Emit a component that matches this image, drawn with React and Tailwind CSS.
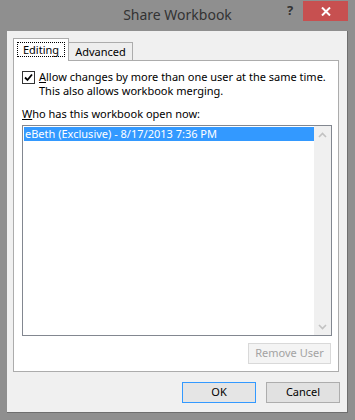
import React from "react";

const Chevron = ({ up }) => (
  <svg width="9" height="6" viewBox="0 0 9 6">
    <polyline
      points={up ? "1,5 4.5,1.5 8,5" : "1,1 4.5,4.5 8,1"}
      fill="none"
      stroke="#c2c2c2"
      strokeWidth="1.6"
    />
  </svg>
);

export default function App() {
  return (
    <div className="w-[355px] h-[420px] bg-[#8f8f8f] flex flex-col font-['Noto_Sans',sans-serif] text-[11px] text-black">
      {/* title bar */}
      <div className="h-[31px] grid grid-cols-[1fr_auto_1fr]">
        <div />
        <div className="pt-[5px] text-[14px] leading-[20px] text-[#333333]">Share Workbook</div>
        <div className="flex justify-end items-start pr-[7px] pt-[1px]">
          <div className="w-[26px] h-[20px] flex items-center justify-center text-[13px] font-bold text-[#333333]">
            ?
          </div>
          <div className="w-[45px] h-[20px] bg-[#c75050] flex items-center justify-center">
            <svg width="10" height="9" viewBox="0 0 10 9">
              <path d="M1 0.5 L9 8.5 M9 0.5 L1 8.5" stroke="#ffffff" strokeWidth="2" />
            </svg>
          </div>
        </div>
      </div>

      {/* client area */}
      <div className="ml-[7px] w-[341px] h-[382px] bg-[#f0f0f0] border-r border-b border-[#6e6e6e] flex flex-col pl-[6px] pt-[7px] pr-[7px] pb-[9px]">
        {/* tabs */}
        <div className="flex items-end h-[22px]">
          <div className="relative z-10 -mb-px w-[56px] h-[23px] bg-white border border-b-0 border-[#acacac] pl-[3px] pt-[3px]">
            <div className="w-[48px] h-[15px] border border-dotted border-black flex items-center justify-center leading-[13px]">
              Editing
            </div>
          </div>
          <div className="w-[64px] h-[18px] bg-[#eeeeee] border border-l-0 border-b-0 border-[#acacac] flex items-center justify-center leading-[13px]">
            Advanced
          </div>
        </div>

        {/* panel */}
        <div className="w-[326px] h-[312px] bg-white border border-[#acacac] flex flex-col pl-[8px] pr-[6px] pt-[10px] pb-[7px]">
          <div className="flex items-start">
            <div className="w-[13px] h-[13px] border border-[#333333] bg-white flex items-center justify-center shrink-0">
              <svg width="9" height="9" viewBox="0 0 9 9">
                <path d="M1 4.5 L3.5 7 L8 1.5" fill="none" stroke="#000000" strokeWidth="1.8" />
              </svg>
            </div>
            <div className="ml-[4px] leading-[14px] -mt-px">
              <div>
                <span className="underline">A</span>llow changes by more than one user at the same time.
              </div>
              <div>This also allows workbook merging.</div>
            </div>
          </div>

          <div className="mt-[9px] leading-[14px]">
            <span className="underline">W</span>ho has this workbook open now:
          </div>

          <div className="mt-[4px] w-[310px] h-[211px] border border-[#828790] bg-white flex">
            <div className="flex-1 pt-px pl-px">
              <div className="h-[14px] bg-[#3399ff] text-white leading-[14px] pl-px">
                eBeth (Exclusive) - 8/17/2013 7:36 PM
              </div>
            </div>
            <div className="w-[17px] bg-[#f0f0f0] flex flex-col justify-between">
              <div className="h-[17px] flex items-center justify-center">
                <Chevron up />
              </div>
              <div className="h-[17px] flex items-center justify-center">
                <Chevron />
              </div>
            </div>
          </div>

          <div className="mt-[7px] flex justify-end pr-px">
            <div className="w-[83px] h-[21px] border border-[#d9d9d9] bg-[#f4f4f4] text-[#a3a3a3] flex items-center justify-center">
              Remove User
            </div>
          </div>
        </div>

        {/* dialog buttons */}
        <div className="mt-[10px] flex justify-end gap-[10px]">
          <div className="w-[74px] h-[21px] border border-[#3399ff] bg-[#e5e5e5] flex items-center justify-center">
            OK
          </div>
          <div className="w-[74px] h-[21px] border border-[#adadad] bg-[#e1e1e1] flex items-center justify-center">
            Cancel
          </div>
        </div>
      </div>
    </div>
  );
}
